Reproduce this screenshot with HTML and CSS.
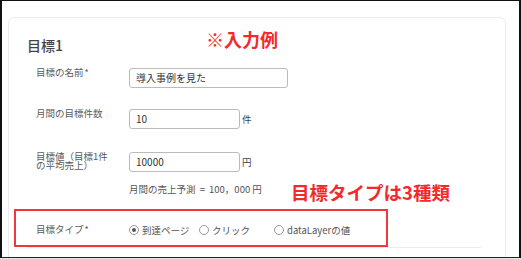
FILE: index.html
```html
<!DOCTYPE html>
<html lang="ja">
<head>
<meta charset="utf-8">
<link rel="stylesheet" href="styles.css">
</head>
<body>
<div class="frame">
  <div class="card">
    <h2 class="title">目標1</h2>
    <div class="form">
      <div class="row row-name">
        <div class="label">目標の名前<span class="req">*</span></div>
        <div class="field"><div class="input wide">導入事例を見た</div></div>
      </div>
      <div class="row row-count">
        <div class="label">月間の目標件数</div>
        <div class="field"><div class="input narrow">10</div><span class="unit">件</span></div>
      </div>
      <div class="row row-value">
        <div class="label label-wrap">目標値（目標1件の平均売上）</div>
        <div class="field"><div class="input narrow">10000</div><span class="unit">円</span></div>
      </div>
      <div class="row row-forecast">
        <div class="label"></div>
        <div class="forecast">月間の売上予測 <span class="eq">=</span> 100，000 円</div>
      </div>
      <div class="row row-type">
        <div class="label">目標タイプ<span class="req">*</span></div>
        <div class="radios">
          <label class="radio"><span class="dot checked"></span>到達ページ</label>
          <label class="radio"><span class="dot"></span>クリック</label>
          <label class="radio"><span class="dot"></span>dataLayerの値</label>
        </div>
      </div>
    </div>
  </div>
  <div class="note note-top">※入力例</div>
  <div class="note note-type">目標タイプは3種類</div>
  <div class="highlight"></div>
</div>
</body>
</html>
```

FILE: styles.css
```css
html { background: #e6e6e6; }
body {
  margin: 0;
  font-family: "Noto Sans CJK JP", "Noto Sans", sans-serif;
  color: #555;
}
.frame {
  position: relative;
  box-sizing: border-box;
  width: 521px;
  height: 258px;
  background: #fff;
  border-top: 1px solid #111;
  border-left: 2px solid #111;
  border-right: 2px solid #111;
  border-bottom: 1px solid #222;
  padding: 16px 0 0 6px;
  overflow: hidden;
}
.card {
  box-sizing: border-box;
  width: 498px;
  height: 270px;
  border: 1px solid #ececec;
  border-radius: 6px;
  padding: 0 24px 0 18px;
}
.title {
  margin: 17px 0 0;
  font-size: 14px;
  line-height: 20px;
  font-weight: 500;
  color: #444;
}
.form { display: flex; flex-direction: column; }
.row {
  display: grid;
  grid-template-columns: 93px 1fr;
  align-items: start;
  padding-left: 9px;
}
.row-name { margin-top: 13px; }
.row-count { margin-top: 21px; }
.row-value { margin-top: 23px; }
.row-forecast { margin-top: 11px; }
.row-type {
  margin-top: 24px;
  padding-bottom: 7px;
  border-bottom: 1px solid #ececec;
  align-items: center;
}
.label {
  font-size: 9.5px;
  line-height: 9px;
  color: #5a5a5a;
}
.row-type .label { line-height: 20px; }
.label-wrap { width: 76px; }
.req { font-size: 9px; margin-left: 1px; }
.field { display: flex; align-items: center; }
.input {
  box-sizing: border-box;
  height: 20px;
  border: 1px solid #bbb;
  border-radius: 3px;
  padding-left: 6px;
  font-size: 10px;
  line-height: 18px;
  color: #333;
}
.wide { width: 159px; }
.narrow { width: 111px; }
.unit {
  margin-left: 2px;
  font-size: 9.5px;
  color: #444;
}
.forecast {
  font-size: 9.5px;
  line-height: 12px;
  color: #555;
}
.eq { margin: 0 2px; }
.radios {
  display: grid;
  grid-template-columns: 70px 75px auto;
  align-items: center;
  height: 20px;
}
.radio {
  display: flex;
  align-items: center;
  font-size: 9.5px;
  color: #555;
}
.dot {
  box-sizing: border-box;
  width: 10px;
  height: 10px;
  border: 1px solid #999;
  border-radius: 50%;
  margin-right: 3px;
  display: flex;
  align-items: center;
  justify-content: center;
}
.dot.checked::after {
  content: "";
  width: 4px;
  height: 4px;
  border-radius: 50%;
  background: #555;
}
.note {
  position: absolute;
  font-weight: 700;
  font-size: 18px;
  line-height: 24px;
  color: #f22a2a;
}
.note-top { left: 204px; top: 26px; }
.note-type { left: 289px; top: 179px; font-size: 18.5px; }
.highlight {
  position: absolute;
  left: 12px;
  top: 208px;
  width: 374px;
  height: 38px;
  box-sizing: border-box;
  border: 2px solid #f2363a;
}
```
